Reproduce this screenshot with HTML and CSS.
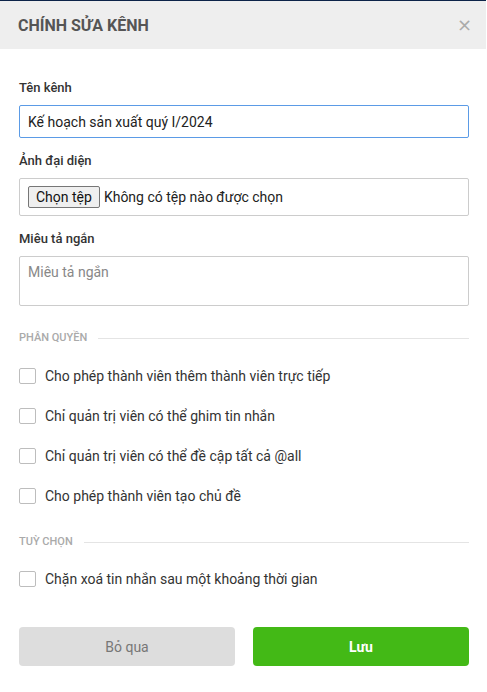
FILE: index.html
```html
<!DOCTYPE html>
<html lang="vi">
<head>
<meta charset="utf-8">
<title>Chỉnh sửa kênh</title>
<link rel="stylesheet" href="styles.css">
</head>
<body>
<div class="modal">
  <div class="modal-header">
    <h1 class="modal-title">CHÍNH SỬA KÊNH</h1>
    <span class="close">&times;</span>
  </div>
  <div class="modal-body">
    <div class="field">
      <label class="field-label">Tên kênh</label>
      <div class="input input-focus">Kế hoạch sản xuất quý I/2024</div>
    </div>
    <div class="field">
      <label class="field-label">Ảnh đại diện</label>
      <div class="input file-input"><span class="file-btn">Chọn tệp</span><span class="file-text">Không có tệp nào được chọn</span></div>
    </div>
    <div class="field">
      <label class="field-label">Miêu tả ngắn</label>
      <div class="input textarea">Miêu tả ngắn</div>
    </div>

    <div class="section-title"><span>PHÂN QUYỀN</span></div>
    <div class="checks">
      <div class="check-row"><span class="box"></span><span>Cho phép thành viên thêm thành viên trực tiếp</span></div>
      <div class="check-row"><span class="box"></span><span>Chỉ quản trị viên có thể ghim tin nhắn</span></div>
      <div class="check-row"><span class="box"></span><span>Chỉ quản trị viên có thể đề cập tất cả @all</span></div>
      <div class="check-row"><span class="box"></span><span>Cho phép thành viên tạo chủ đề</span></div>
    </div>

    <div class="section-title section-2"><span>TUỲ CHỌN</span></div>
    <div class="checks checks-2">
      <div class="check-row"><span class="box"></span><span>Chặn xoá tin nhắn sau một khoảng thời gian</span></div>
    </div>

    <div class="actions">
      <button class="btn btn-cancel">Bỏ qua</button>
      <button class="btn btn-save">Lưu</button>
    </div>
  </div>
</div>
</body>
</html>
```
FILE: styles.css
```css
* { box-sizing: border-box; }
html, body { margin: 0; padding: 0; background: #fff; }
body { font-family: Roboto, "Noto Sans", "Liberation Sans", sans-serif; color: #333; width: 487px; height: 692px; overflow: hidden; }

.modal { width: 487px; }

.modal-header {
  border-top: 1px solid #0c2348;
  background: #eeeeee;
  height: 49px;
  display: flex;
  align-items: center;
  justify-content: space-between;
  padding: 0 14px 0 18px;
  margin-right: 1px;
}
.modal-title {
  margin: 0;
  font-size: 16px;
  font-weight: 700;
  color: #555;
}
.close {
  font-size: 18px;
  color: #aaa;
  line-height: 1;
  font-family: "DejaVu Sans", sans-serif;
}

.modal-body { padding: 31px 18px 0 19px; }

.field { margin-bottom: 15px; }
.field-label {
  display: block;
  font-size: 13px;
  font-weight: 500;
  line-height: 16px;
  color: #333;
  margin-bottom: 9px;
}
.input {
  border: 1px solid #cccccc;
  border-radius: 2px;
  font-size: 14px;
  color: #222;
  display: flex;
  align-items: center;
  padding: 0 8px;
}
.input-focus { height: 33px; border-color: #5b9be6; }
.file-input { height: 38px; padding-left: 8px; }
.file-btn {
  display: inline-block;
  background: #efefef;
  border: 1px solid #767676;
  border-radius: 2px;
  height: 22px;
  line-height: 20px;
  padding: 0 7px;
  font-size: 14px;
  color: #111;
  margin-right: 4px;
}
.file-text { color: #222; }
.textarea { height: 50px; align-items: flex-start; padding-top: 7px; color: #888; }

.section-title {
  margin-top: 26px;
  display: flex;
  align-items: center;
  font-size: 11px;
  line-height: 12px;
  font-weight: 500;
  color: #aaa;
}
.section-title::after {
  content: "";
  flex: 1;
  height: 1px;
  background: #e4e4e4;
  margin-left: 11px;
}
.section-2 { margin-top: 20px; }

.checks { margin-top: 12px; }
.checks-2 { margin-top: 11px; }
.check-row {
  height: 40px;
  display: flex;
  align-items: center;
  font-size: 14px;
  color: #333;
}
.box {
  width: 17px;
  height: 16px;
  border: 1px solid #bdbdbd;
  border-radius: 2px;
  margin-right: 9px;
  flex: none;
}

.actions {
  margin-top: 28px;
  display: grid;
  grid-template-columns: 1fr 1fr;
  gap: 18px;
}
.btn {
  height: 39px;
  border: none;
  border-radius: 4px;
  font-family: Roboto, "Noto Sans", "Liberation Sans", sans-serif;
  font-size: 14px;
}
.btn-cancel { background: #dddddd; color: #777; }
.btn-save { background: #43b916; color: #fff; font-weight: 700; }
```
